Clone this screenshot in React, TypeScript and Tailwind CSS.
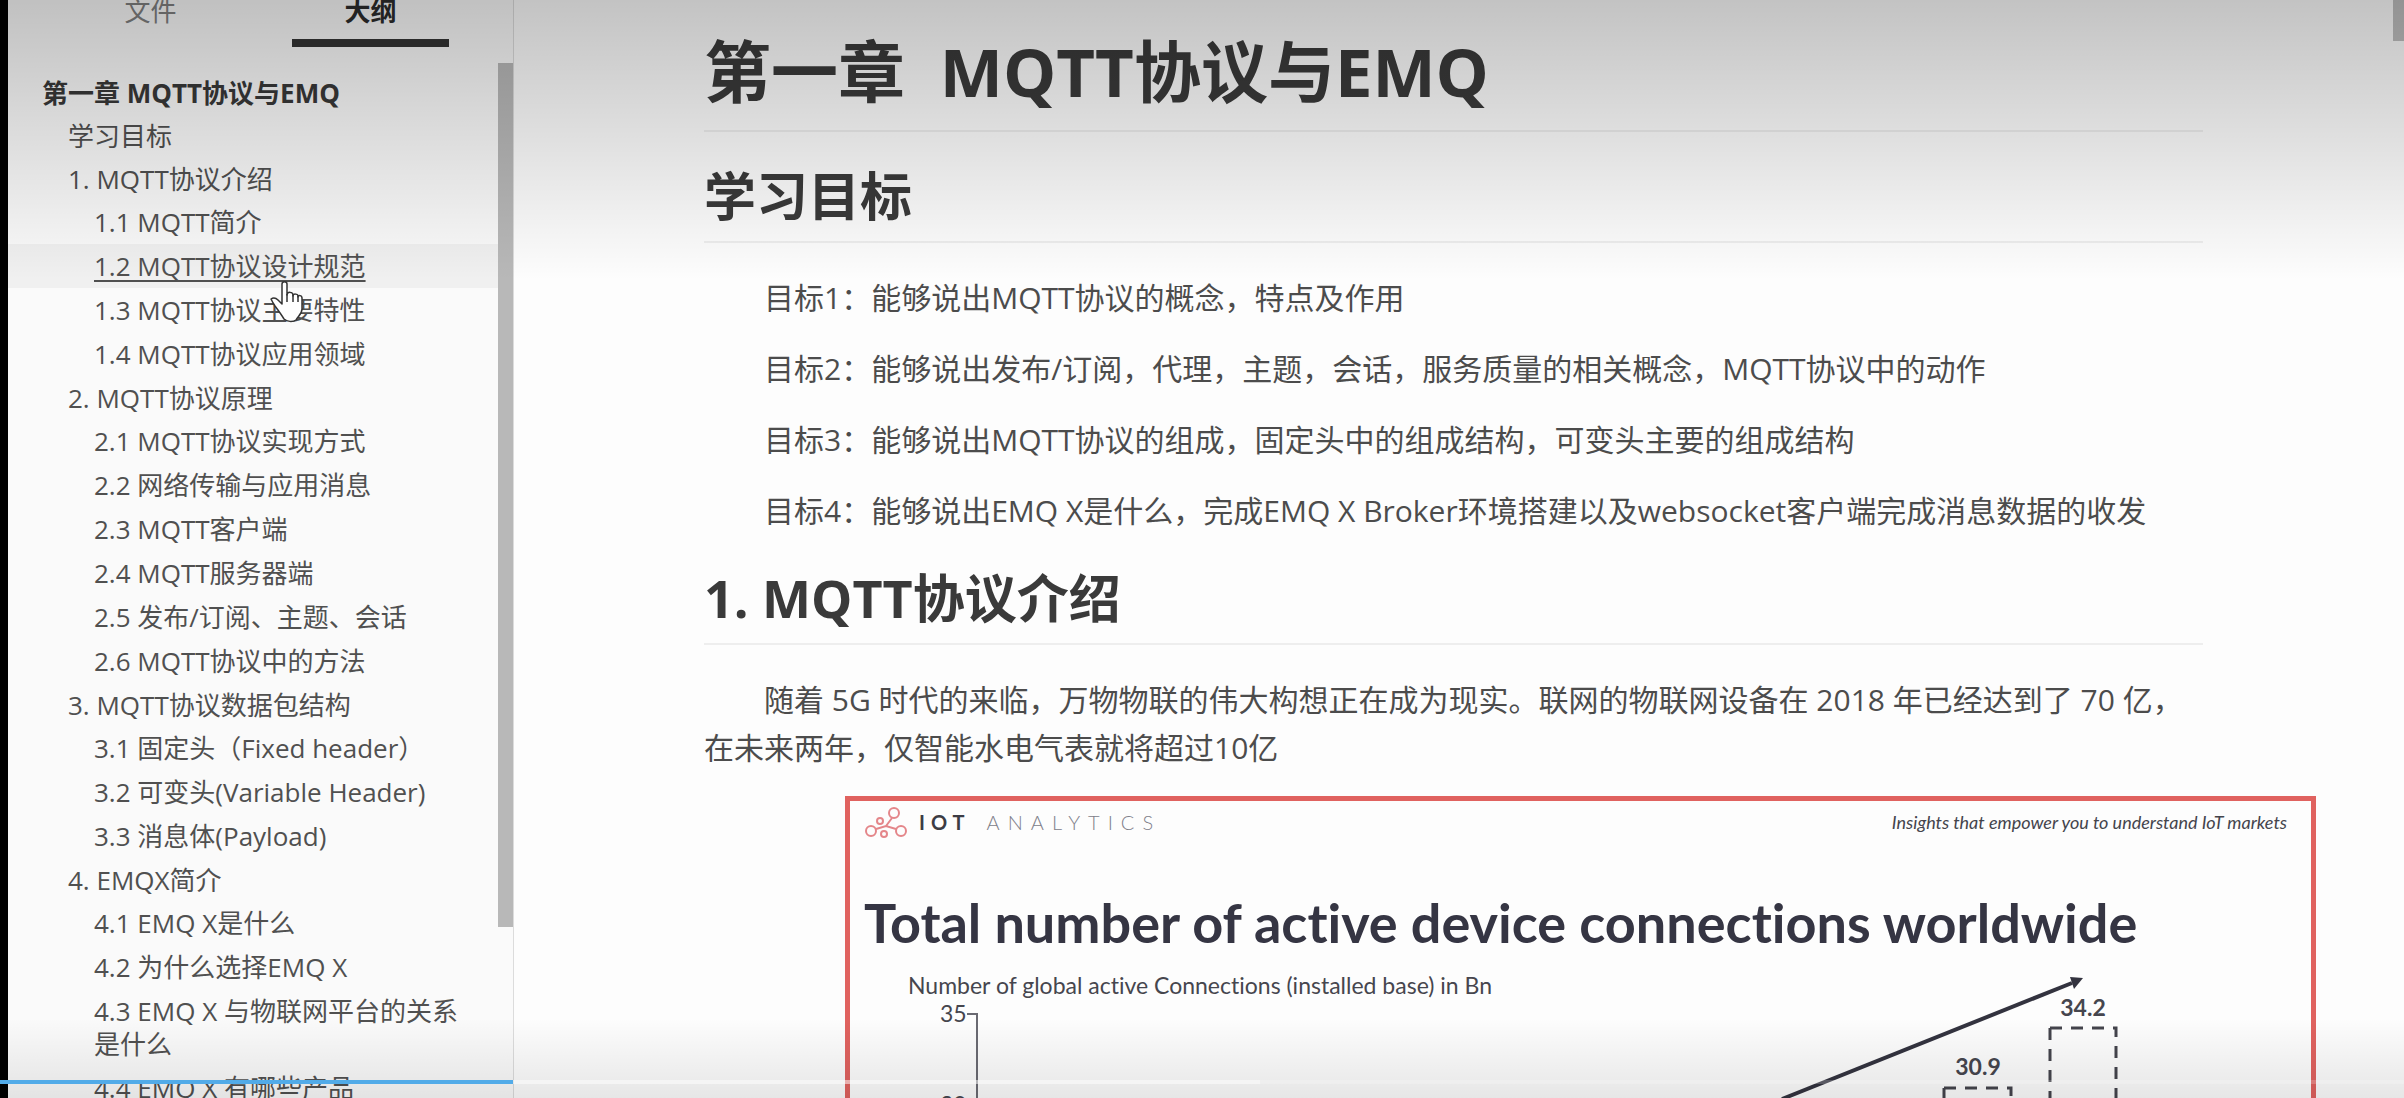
import React from "react";

type Entry = { level: 0 | 1 | 2; text: string; active?: boolean };

const outline: Entry[] = [
  { level: 0, text: "第一章 MQTT协议与EMQ" },
  { level: 1, text: "学习目标" },
  { level: 1, text: "1. MQTT协议介绍" },
  { level: 2, text: "1.1 MQTT简介" },
  { level: 2, text: "1.2 MQTT协议设计规范", active: true },
  { level: 2, text: "1.3 MQTT协议主要特性" },
  { level: 2, text: "1.4 MQTT协议应用领域" },
  { level: 1, text: "2. MQTT协议原理" },
  { level: 2, text: "2.1 MQTT协议实现方式" },
  { level: 2, text: "2.2 网络传输与应用消息" },
  { level: 2, text: "2.3 MQTT客户端" },
  { level: 2, text: "2.4 MQTT服务器端" },
  { level: 2, text: "2.5 发布/订阅、主题、会话" },
  { level: 2, text: "2.6 MQTT协议中的方法" },
  { level: 1, text: "3. MQTT协议数据包结构" },
  { level: 2, text: "3.1 固定头（Fixed header）" },
  { level: 2, text: "3.2 可变头(Variable Header)" },
  { level: 2, text: "3.3 消息体(Payload)" },
  { level: 1, text: "4. EMQX简介" },
  { level: 2, text: "4.1 EMQ X是什么" },
  { level: 2, text: "4.2 为什么选择EMQ X" },
  { level: 2, text: "4.3 EMQ X 与物联网平台的关系是什么" },
  { level: 2, text: "4.4 EMQ X 有哪些产品" },
];

const rowStyles = {
  0: "pt-[7px] pb-1 pl-[34px] font-bold text-[#383838]",
  1: "pt-[6px] pb-1 pl-[60px]",
  2: "pt-[6px] pb-[5px] pl-[86px]",
};

const goals = [
  "目标1：能够说出MQTT协议的概念，特点及作用",
  "目标2：能够说出发布/订阅，代理，主题，会话，服务质量的相关概念，MQTT协议中的动作",
  "目标3：能够说出MQTT协议的组成，固定头中的组成结构，可变头主要的组成结构",
  "目标4：能够说出EMQ X是什么，完成EMQ X Broker环境搭建以及websocket客户端完成消息数据的收发",
];

function HandCursor() {
  return (
    <svg
      aria-hidden="true"
      viewBox="0 0 38 44"
      className="pointer-events-none absolute left-[260px] top-9 z-10 h-[44px] w-[38px]"
    >
      <path
        d="M14 24V4c0-3 5-3 5 0v11c0-4 6-3 6 0v1c0-3 5-2 5 0v1c0-2 4-2 4 1v11c0 5-4 7-6 11-3 2-9 2-12-1-3-5-6-9-9-13-2-3-3-5-4-7 3-2 5-1 7 1z"
        fill="#fff"
        stroke="#333"
        strokeWidth="1.5"
        strokeLinejoin="round"
      />
      <path d="M19 14v8M25 15v7M30 16v6" stroke="#333" strokeWidth="1.5" />
    </svg>
  );
}

function Sidebar() {
  return (
    <aside className="flex w-[506px] shrink-0 flex-col border-r border-[#dcdcdc] bg-[#fafafa] text-[26px] leading-[33px] text-[#505050]">
      <div role="tablist" className="flex h-[47px] shrink-0 items-end gap-[63px] pl-[64px]">
        <button role="tab" aria-selected="false" className="w-[157px] pb-[19px] text-[#808080]">
          文件
        </button>
        <button
          role="tab"
          aria-selected="true"
          className="w-[157px] border-b-8 border-[#343434] pb-[11px] font-bold text-[#2c2c2c]"
        >
          大纲
        </button>
      </div>
      <div className="mt-4 flex min-h-0 grow">
        <nav aria-label="大纲" className="min-w-0 grow overflow-hidden pt-[7px]">
          <ul>
            {outline.map((e) => (
              <li key={e.text} className="relative">
                <a
                  href="#"
                  className={
                    rowStyles[e.level] +
                    " block pr-[30px] " +
                    (e.active ? "bg-[#f0f0f0] underline decoration-2 underline-offset-4" : "")
                  }
                >
                  {e.text}
                </a>
                {e.active && <HandCursor />}
              </li>
            ))}
          </ul>
        </nav>
        <div className="w-[15px] shrink-0">
          <div className="h-[864px] bg-[#b8b8b8]" />
        </div>
      </div>
    </aside>
  );
}

function LogoMark() {
  return (
    <svg aria-hidden="true" viewBox="0 0 44 32" className="h-8 w-11" fill="none" stroke="#e4868a" strokeWidth="2">
      <circle cx="30" cy="7" r="5" />
      <circle cx="16" cy="15" r="3" />
      <circle cx="7" cy="25" r="5" />
      <circle cx="20" cy="28" r="3" />
      <circle cx="37" cy="25" r="5" />
      <path d="M28 12l-6 8M12 23l10-3 10 3" />
    </svg>
  );
}

function DeviceChart() {
  return (
    <svg
      role="img"
      aria-label="Number of global active connections by year"
      viewBox="0 0 1461 300"
      className="absolute left-0 top-[170px] h-[300px] w-[1461px]"
      fontFamily="Lato, sans-serif"
      fontSize="23"
      fill="#46464e"
    >
      <path d="M117 43h10v257M117 134h10" fill="none" stroke="#6a6a72" strokeWidth="2" />
      <text x="90" y="51">35</text>
      <text x="90" y="142">30</text>
      <path d="M932 128L1222 12" stroke="#33333f" strokeWidth="4" />
      <path d="M1233 7l-13-1 4 12z" fill="#33333f" />
      <g fontWeight="700" textAnchor="middle">
        <text x="1233" y="45">34.2</text>
        <text x="1128" y="104">30.9</text>
      </g>
      <g fill="none" stroke="#44444c" strokeWidth="3" strokeDasharray="12 9">
        <path d="M1200 57v243M1200 57h66v243" />
        <path d="M1094 117v183M1094 117h67v183" />
      </g>
    </svg>
  );
}

function Slide() {
  return (
    <figure className="relative -mr-[113px] ml-[141px] mt-6 h-[900px] overflow-hidden border-[5px] border-[#e0625f] bg-[#fdfdfd] font-[Lato,sans-serif] [font-variant-ligatures:none]">
      <div className="flex items-center justify-between pl-[14px] pr-6 pt-[5px]">
        <div className="flex items-center gap-[11px]">
          <LogoMark />
          <div className="flex items-center gap-4 text-[20px] leading-8">
            <span className="font-bold tracking-[6px] text-[#3c3c44]">IOT</span>
            <span className="font-light tracking-[8px] text-[#80808a]">ANALYTICS</span>
          </div>
        </div>
        <p className="text-[18px] italic leading-8 text-[#44444c]">
          Insights that empower you to understand IoT markets
        </p>
      </div>
      <p className="pl-[14px] pt-[53px] text-[54px] font-bold leading-[64px] text-[#353543]">
        Total number of active device connections worldwide
      </p>
      <p className="pl-[58px] pt-[14px] text-[23px] leading-8 text-[#46464e]">
        Number of global active Connections (installed base) in Bn
      </p>
      <DeviceChart />
    </figure>
  );
}

export default function App() {
  return (
    <div className="relative flex h-screen overflow-hidden bg-[#fdfdfd] font-['Open_Sans','Noto_Sans_CJK_SC',sans-serif]">
      <div className="w-2 shrink-0 bg-black" />
      <Sidebar />
      <main className="min-w-0 grow overflow-hidden px-[190px] text-[30px] leading-[48px] text-[#4c4c4c]">
        <h1 className="mt-[21px] whitespace-pre border-b-2 border-[#eeeeee] pb-[9px] text-[67px] font-bold leading-[100px] text-[#3a3a3a]">
          {"第一章  MQTT协议与EMQ"}
        </h1>
        <h2 className="mt-[29px] border-b-2 border-[#eeeeee] pb-[10px] text-[52px] font-bold leading-[70px] text-[#3a3a3a]">
          学习目标
        </h2>
        <div className="mt-[31px] flex flex-col gap-[23px]">
          {goals.map((g) => (
            <p key={g} className="indent-[60px]">
              {g}
            </p>
          ))}
        </div>
        <h2 className="mt-7 border-b-2 border-[#eeeeee] pb-[10px] text-[52px] font-bold leading-[70px] text-[#3a3a3a]">
          1. MQTT协议介绍
        </h2>
        <p className="mt-[31px] indent-[60px]">
          随着 5G 时代的来临，万物物联的伟大构想正在成为现实。联网的物联网设备在 2018 年已经达到了 70 亿，在未来两年，仅智能水电气表就将超过10亿
        </p>
        <Slide />
      </main>
      <div className="w-[11px] shrink-0">
        <div className="h-[41px] bg-[#bfbfbf]" />
      </div>

      <div className="pointer-events-none absolute inset-x-0 top-0 h-[280px] bg-linear-to-b from-black/23 to-transparent" />
      <div className="pointer-events-none absolute inset-x-0 bottom-0 h-[80px] bg-linear-to-t from-black/9 to-transparent" />
      <div
        role="progressbar"
        aria-label="播放进度"
        aria-valuenow={21}
        className="absolute inset-x-0 bottom-[14px] flex h-1 bg-white/20"
      >
        <div className="w-[513px] bg-[#52abe8]" />
        <div className="w-[747px] bg-white/40" />
      </div>
    </div>
  );
}
